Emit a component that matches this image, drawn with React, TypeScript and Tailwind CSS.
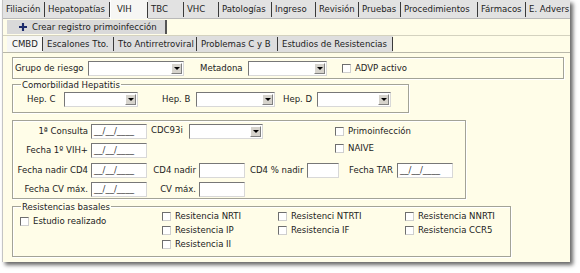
import React from "react";

const topTabs = [
  { label: "Filiación", w: "w-[42px]" },
  { label: "Hepatopatías", w: "w-[65px]" },
  { label: "VIH", w: "w-[38px]", active: true },
  { label: "TBC", w: "w-[36px]" },
  { label: "VHC", w: "w-[35px]" },
  { label: "Patologías", w: "w-[53px]" },
  { label: "Ingreso", w: "w-[44px]" },
  { label: "Revisión", w: "w-[43px]" },
  { label: "Pruebas", w: "w-[42px]" },
  { label: "Procedimientos", w: "w-[77px]" },
  { label: "Fármacos", w: "w-[48px]" },
  { label: "E. Advers", w: "flex-1" },
];

const subTabs = [
  { label: "CMBD", w: "w-[36px]", active: true },
  { label: "Escalones Tto.", w: "w-[71px]" },
  { label: "Tto Antirretroviral", w: "w-[83px]" },
  { label: "Problemas C y B", w: "w-[81px]" },
  { label: "Estudios de Resistencias", w: "w-[115px]" },
];

const field =
  "bg-white border border-t-[#777] border-l-[#777] border-r-[#d8d8d8] border-b-[#d8d8d8]";

const box =
  "border border-[#a3a397] shadow-[inset_1px_1px_0_#fff,1px_1px_0_#fff]";

function Select({ w }: { w: string }) {
  return (
    <div className={`${w} h-[15px] ${field} flex items-center justify-end`}>
      <div className="w-[11px] h-[11px] mr-[1px] bg-[#d6d3cc] border border-t-white border-l-white border-r-[#808080] border-b-[#808080] flex items-center justify-center">
        <span className="w-0 h-0 border-x-[3px] border-t-[3px] border-x-transparent border-t-black" />
      </div>
    </div>
  );
}

function DateInput() {
  return (
    <div className={`w-[56px] h-[15px] ${field} pl-[2px] text-[#333] leading-[11px] overflow-hidden whitespace-nowrap`}>
      __/__/____
    </div>
  );
}

function TextInput({ w }: { w: string }) {
  return <div className={`${w} h-[15px] ${field}`} />;
}

function Check({ label, className = "" }: { label: string; className?: string }) {
  return (
    <div className={`flex items-center ${className}`}>
      <span className="w-[9px] h-[9px] shrink-0 bg-white border border-t-[#6e6e6e] border-l-[#6e6e6e] border-r-[#cfcfcf] border-b-[#cfcfcf]" />
      <span className="ml-[4px] whitespace-nowrap">{label}</span>
    </div>
  );
}

export default function App() {
  return (
    <div className="w-[580px] h-[273px] bg-white font-['DejaVu_Sans_Condensed','DejaVu_Sans',sans-serif] text-[9.5px] text-[#222]">
      <div className="ml-[2px] w-[568px] h-[262px] bg-[#fffde8] border-l border-[#c4c4c4] shadow-[3px_3px_4px_rgba(0,0,0,0.6)] overflow-hidden">
        {/* Top tabs */}
        <div className="flex h-[19px] bg-[#e2e2e2]">
          {topTabs.map((t) =>
            t.active ? (
              <div
                key={t.label}
                className={`${t.w} h-full bg-[#f6f6f4] border-l border-white flex items-center justify-between pl-[6px]`}
              >
                <span>{t.label}</span>
                <span className="h-[16px] w-px bg-[#3a3a3a]" />
              </div>
            ) : (
              <div
                key={t.label}
                className={`${t.w} h-full border-b border-[#b9b9b9] flex items-center justify-between pl-[3px] overflow-hidden whitespace-nowrap`}
              >
                <span>{t.label}</span>
                {t.label !== "E. Advers" && <span className="h-[15px] w-px shrink-0 bg-[#3a3a3a]" />}
              </div>
            )
          )}
        </div>

        {/* Action bar */}
        <div className="h-[16px] pl-[4px] border-b border-[#d4d2bf]">
          <button className="mt-[1px] h-[14px] w-[160px] bg-[#d9d9d9] border-r-2 border-[#555] flex items-center pl-[12px] whitespace-nowrap">
            <svg width="8" height="8" viewBox="0 0 9 9" className="shrink-0">
              <path d="M3.3 0h2.4v3.3H9v2.4H5.7V9H3.3V5.7H0V3.3h3.3z" fill="#1d2b6b" />
            </svg>
            <span className="ml-[5px]">Crear registro primoinfección</span>
          </button>
        </div>

        {/* Sub tabs */}
        <div className="h-[17px] pl-[4px] flex border-b border-[#b9b8aa]">
          {subTabs.map((t) => (
            <div
              key={t.label}
              className={`${t.w} h-full flex items-center justify-between whitespace-nowrap ${
                t.active ? "bg-[#f6f6f4] pl-[5px]" : "bg-[#dedede] pl-[4px]"
              }`}
            >
              <span>{t.label}</span>
              <span className="h-[14px] w-px shrink-0 bg-[#3a3a3a]" />
            </div>
          ))}
        </div>

        {/* Grupo de riesgo */}
        <fieldset className={`ml-[9px] mt-[4px] w-[552px] h-[22px] ${box} flex items-center pl-[2px]`}>
          <span className="w-[73px]">Grupo de riesgo</span>
          <Select w="w-[96px]" />
          <span className="ml-[16px] w-[48px]">Metadona</span>
          <Select w="w-[79px]" />
          <Check label="ADVP activo" className="ml-[15px]" />
        </fieldset>

        {/* Comorbilidad Hepatitis */}
        <fieldset className={`ml-[9px] w-[397px] h-[34px] ${box} pl-[8px]`}>
          <legend className="px-[1px] leading-[11px]">Comorbilidad Hepatitis</legend>
          <div className="mt-[2px] ml-[6px] flex items-center">
            <span className="w-[37px]">Hep. C</span>
            <Select w="w-[74px]" />
            <span className="ml-[24px] w-[34px]">Hep. B</span>
            <Select w="w-[79px]" />
            <span className="ml-[8px] w-[34px]">Hep. D</span>
            <Select w="w-[74px]" />
          </div>
        </fieldset>

        {/* Fechas */}
        <fieldset className={`ml-[9px] mt-[7px] w-[454px] h-[79px] ${box} pt-[3px]`}>
          <div className="flex items-center h-[15px]">
            <span className="w-[75px] text-right">1ª Consulta</span>
            <div className="ml-[3px]"><DateInput /></div>
            <span className="ml-[4px] w-[38px] self-start -mt-[1px]">CDC93i</span>
            <Select w="w-[74px]" />
            <Check label="Primoinfección" className="ml-[72px]" />
          </div>
          <div className="flex items-center h-[15px] mt-[4px]">
            <span className="w-[75px] text-right">Fecha 1º VIH+</span>
            <div className="ml-[3px]"><DateInput /></div>
            <Check label="NAIVE" className="ml-[188px] -mt-[4px]" />
          </div>
          <div className="flex items-center h-[15px] mt-[5px]">
            <span className="w-[75px] text-right whitespace-nowrap">Fecha nadir CD4</span>
            <div className="ml-[3px]"><DateInput /></div>
            <span className="w-[49px] text-right">CD4 nadir</span>
            <div className="ml-[3px]"><TextInput w="w-[46px]" /></div>
            <span className="ml-[5px] w-[57px] whitespace-nowrap">CD4 % nadir</span>
            <TextInput w="w-[32px]" />
            <span className="ml-[10px] w-[48px] whitespace-nowrap">Fecha TAR</span>
            <DateInput />
          </div>
          <div className="flex items-center h-[15px] mt-[4px]">
            <span className="w-[75px] text-right">Fecha CV máx.</span>
            <div className="ml-[3px]"><DateInput /></div>
            <span className="w-[49px] text-right">CV máx.</span>
            <div className="ml-[3px]"><TextInput w="w-[46px]" /></div>
          </div>
        </fieldset>

        {/* Resistencias basales */}
        <fieldset className={`ml-[9px] mt-[2px] w-[499px] h-[56px] ${box} pl-[8px]`}>
          <legend className="px-[1px] leading-[11px]">Resistencias basales</legend>
          <div className="flex -mt-[3px] -ml-[1px]">
            <div className="w-[142px] pt-[5px]">
              <Check label="Estudio realizado" />
            </div>
            <div className="w-[116px] flex flex-col">
              <Check label="Resitencia NRTI" className="h-[14px]" />
              <Check label="Resistencia IP" className="h-[14px]" />
              <Check label="Resistencia II" className="h-[14px]" />
            </div>
            <div className="w-[127px] flex flex-col">
              <Check label="Resistenci NTRTI" className="h-[14px]" />
              <Check label="Resistencia IF" className="h-[14px]" />
            </div>
            <div className="flex flex-col">
              <Check label="Resistencia NNRTI" className="h-[14px]" />
              <Check label="Resistencia CCR5" className="h-[14px]" />
            </div>
          </div>
        </fieldset>
      </div>
    </div>
  );
}
